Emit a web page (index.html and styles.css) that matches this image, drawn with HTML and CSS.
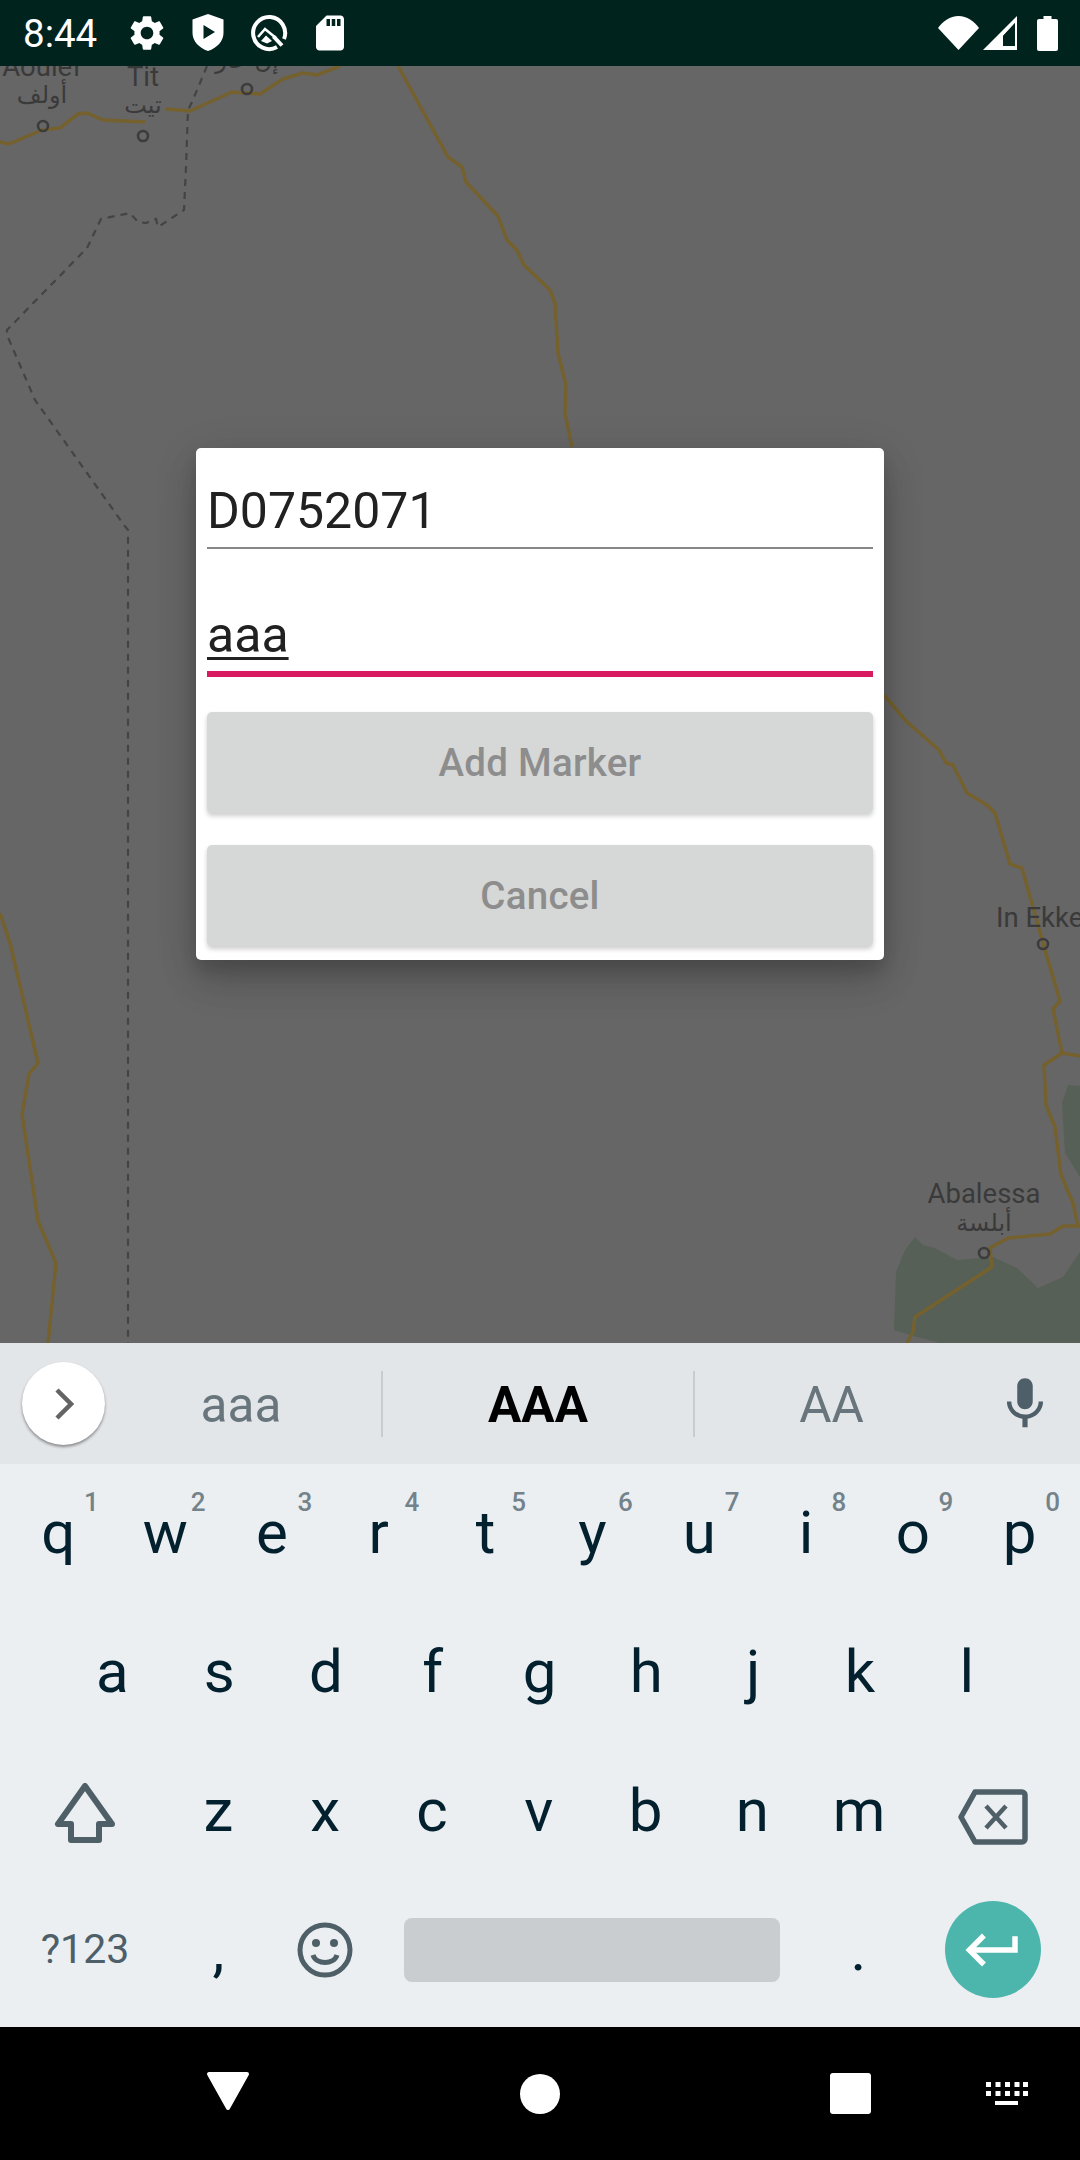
FILE: index.html
```html
<!DOCTYPE html>
<html lang="en">
<head>
<meta charset="utf-8">
<title>Add Marker</title>
<link rel="stylesheet" href="styles.css">
</head>
<body>
<div class="screen">
  <header class="status">
    <span class="time">8:44</span>
    <div class="status-left">
      <svg class="si" viewBox="0 0 24 24"><path fill-rule="evenodd" d="M19.14 12.94c.04-.3.06-.61.06-.94 0-.32-.02-.64-.07-.94l2.03-1.58c.18-.14.23-.41.12-.61l-1.92-3.32c-.12-.22-.37-.29-.59-.22l-2.39.96c-.5-.38-1.03-.7-1.62-.94l-.36-2.54c-.04-.24-.24-.41-.48-.41h-3.84c-.24 0-.43.17-.47.41l-.36 2.54c-.59.24-1.13.57-1.62.94l-2.39-.96c-.22-.08-.47 0-.59.22L2.74 8.87c-.12.21-.08.47.12.61l2.03 1.58c-.05.3-.09.63-.09.94s.02.64.07.94l-2.03 1.58c-.18.14-.23.41-.12.61l1.92 3.32c.12.22.37.29.59.22l2.39-.96c.5.38 1.03.7 1.62.94l.36 2.54c.05.24.24.41.48.41h3.84c.24 0 .44-.17.47-.41l.36-2.54c.59-.24 1.13-.56 1.62-.94l2.39.96c.22.08.47 0 .59-.22l1.92-3.32c.12-.22.07-.47-.12-.61l-2.01-1.58zM12 15.6c-1.98 0-3.6-1.62-3.6-3.6s1.62-3.6 3.6-3.6 3.6 1.62 3.6 3.6-1.62 3.6-3.6 3.6z"/></svg>
      <svg class="si" viewBox="0 0 42 42"><path fill-rule="evenodd" d="M21 2 L36.500 7.500 V21 C36.500 29 30 36 21 39 C12 36 5.500 29 5.500 21 V7.500 Z M16.500 13 V27 L28 20 Z"/></svg>
      <svg class="si" viewBox="0 0 42 42"><path class="q-ring" d="M29 35 A16 16 0 1 1 36 27"/><path class="q-ring" d="M25.500 24.500 L34 33.500"/><path class="q-chevron" d="M10 25 L17 17 L28 26"/><path d="M13 29 L18 23.500 L24 29 L19 31.500 Z"/></svg>
      <svg class="si" viewBox="0 0 24 24"><path d="M18 2h-8L4.020 8 4 20c0 1.100.9 2 2 2h12c1.100 0 2-.9 2-2V4c0-1.100-.9-2-2-2zm-6 6h-2V4h2v4zm3 0h-2V4h2v4zm3 0h-2V4h2v4z"/></svg>
    </div>
    <div class="status-right">
      <svg class="wifi" viewBox="0 0 41 34"><path d="M20.500 34 L0 12 C5 5 12 0 20.500 0 S36 5 41 12 Z"/></svg>
      <svg class="signal" viewBox="0 0 34 34"><path fill-rule="evenodd" d="M34 0 V34 H0 Z M32 30 V7 L20 20 V30 Z"/><path class="sig-dim" d="M32 7 V30 H20 V20 Z"/></svg>
      <svg class="battery" viewBox="0 0 21 35"><path d="M6.500 0 H14.500 V3 H19 A2 2 0 0 1 21 5 V33 A2 2 0 0 1 19 35 H2 A2 2 0 0 1 0 33 V5 A2 2 0 0 1 2 3 H6.500 Z"/></svg>
    </div>
  </header>

  <main class="map">
    <svg class="map-art" viewBox="0 66 1080 1277">
      <path class="green" d="M915 1237 L905 1250 L896 1272 L894 1330 L917 1337 L940 1343 H1080 V1252 L1063 1277 L1038 1288 L1017 1268 L993 1257 L957 1260 L935 1248 L923 1245 Z"/>
      <path class="green" d="M1068 1085 L1062 1103 L1065 1153 L1080 1177 V1086 Z"/>
      <path class="border" d="M207 66 L192 102 L188 110 L186 167 L184 210 L158 227 L156 219 L146 223 L138 222 L130 213 L101 219 L87 248 L7 330 L7 335 L35 400 L124 525 L128 530 V900 L128 1343"/>
      <path class="road" d="M0 142 L9 144 L42 130 L60 128 L78 114 L87 113 L103 120 L145 122"/>
      <path class="road" d="M166 109 L190 111 L232 92 L260 94 L283 79 L303 73 L317 75 L340 66"/>
      <path class="road" d="M398 66 L448 157 L462 167 L466 182 L498 216 L507 240 L517 250 L524 265 L550 290 L555 303 L558 353 L566 385 L565 413 L572 447"/>
      <path class="road" d="M884 695 L906 721 L939 750 L946 763 L953 765 L967 793 L987 805 L995 813 L1010 864 L1022 868 L1043 943 L1060 1001 L1053 1009 L1062 1053 L1044 1065 L1046 1105 L1055 1127 L1061 1175 L1073 1203 L1078 1226 L1063 1226 L1050 1234 L1008 1238 L990 1248 L992 1267 L915 1317 L913 1332 L907 1343"/>
      <path class="road" d="M1062 1053 L1080 1056"/>
      <path class="road" d="M1078 1226 H1080"/>
      <path class="road" d="M0 913 L10 943 L38 1063 L29 1074 L22 1114 L38 1221 L56 1263 L48 1343"/>
      <circle class="dot" cx="43" cy="126" r="5"/>
      <circle class="dot" cx="143" cy="136" r="5"/>
      <circle class="dot" cx="247" cy="89" r="5"/>
      <circle class="dot" cx="1043" cy="944" r="5"/>
      <circle class="dot" cx="984" cy="1253" r="5"/>
      <text class="label" x="42" y="76">Aoulef</text>
      <text class="label-ar" x="42" y="103">أولف</text>
      <text class="label" x="143" y="86">Tit</text>
      <text class="label-ar" x="143" y="113">تيت</text>
      <text class="label-ar" x="247" y="68">إن غار</text>
      <text class="label label-start" x="996" y="927">In Ekker</text>
      <text class="label" x="984" y="1203">Abalessa</text>
      <text class="label-ar" x="984" y="1231">أبلسة</text>
    </svg>
    <div class="scrim">
      <section class="dialog">
        <div class="field">D0752071</div>
        <div class="field field-active"><span class="composing">aaa</span></div>
        <div class="btn btn-first">Add Marker</div>
        <div class="btn">Cancel</div>
      </section>
    </div>
  </main>

  <section class="keyboard">
    <div class="strip">
      <div class="chip-wrap">
        <div class="chip"><svg class="chev" viewBox="0 0 20 34"><path d="M3 3 L17 17 L3 31"/></svg></div>
      </div>
      <div class="sug sug-1">aaa</div>
      <div class="sug sug-2">AAA</div>
      <div class="sug sug-3">AA</div>
      <svg class="mic" viewBox="0 0 24 24"><path d="M12 14c1.660 0 2.990-1.340 2.990-3L15 5c0-1.660-1.340-3-3-3S9 3.340 9 5v6c0 1.660 1.340 3 3 3zm5.300-3c0 3-2.540 5.100-5.300 5.100S6.700 14 6.700 11H5c0 3.410 2.720 6.230 6 6.720V21h2v-3.280c3.280-.48 6-3.300 6-6.720h-1.700z"/></svg>
    </div>
    <div class="keys">
      <div class="row row-1">
        <div class="key">q<span class="hint">1</span></div>
        <div class="key">w<span class="hint">2</span></div>
        <div class="key">e<span class="hint">3</span></div>
        <div class="key">r<span class="hint">4</span></div>
        <div class="key">t<span class="hint">5</span></div>
        <div class="key">y<span class="hint">6</span></div>
        <div class="key">u<span class="hint">7</span></div>
        <div class="key">i<span class="hint">8</span></div>
        <div class="key">o<span class="hint">9</span></div>
        <div class="key">p<span class="hint">0</span></div>
      </div>
      <div class="row row-2">
        <div class="key">a</div><div class="key">s</div><div class="key">d</div><div class="key">f</div><div class="key">g</div><div class="key">h</div><div class="key">j</div><div class="key">k</div><div class="key">l</div>
      </div>
      <div class="row row-3">
        <div class="key"><svg class="k-shift" viewBox="0 0 62 60"><path d="M31 3 L4 41 H17 V57 H45 V41 H58 Z"/></svg></div>
        <div class="key">z</div><div class="key">x</div><div class="key">c</div><div class="key">v</div><div class="key">b</div><div class="key">n</div><div class="key">m</div>
        <div class="key"><svg class="k-back" viewBox="0 0 70 56"><path d="M3 28 L17 3 H64 A3 3 0 0 1 67 6 V50 A3 3 0 0 1 64 53 H17 Z"/><path class="k-x" d="M28 17 L48 39 M48 17 L28 39"/></svg></div>
      </div>
      <div class="row row-4">
        <div class="key key-sym">?123</div>
        <div class="key">,</div>
        <div class="key"><svg class="k-emoji" viewBox="0 0 56 56"><circle cx="28" cy="28" r="25"/><circle class="k-eye" cx="19" cy="21" r="4"/><circle class="k-eye" cx="37" cy="21" r="4"/><path d="M16 33 C19 43 37 43 40 33"/></svg></div>
        <div class="key"><div class="space"></div></div>
        <div class="key">.</div>
        <div class="key"><div class="enter"><svg class="k-enter" viewBox="0 0 24 24"><path d="M19 7v4H5.830l3.580-3.590L8 6l-6 6 6 6 1.410-1.410L5.830 13H21V7z"/></svg></div></div>
      </div>
    </div>
  </section>

  <footer class="nav">
    <svg class="nav-back" viewBox="0 0 44 46"><path d="M3 3 H41 L22 37 Z"/></svg>
    <svg class="nav-home" viewBox="0 0 40 40"><circle cx="20" cy="20" r="20"/></svg>
    <svg class="nav-recent" viewBox="0 0 41 41"><rect width="41" height="41" rx="3"/></svg>
    <svg class="nav-kbd" viewBox="0 0 42 23">
      <path d="M0 0h5v5H0zM9.500 0h5v5h-5zM19 0h5v5h-5zM28.500 0h5v5h-5zM37 0h5v5h-5zM0 9h5v5H0zM9.500 9h5v5h-5zM19 9h5v5h-5zM28.500 9h5v5h-5zM37 9h5v5h-5zM9 19h23v4H9z"/>
    </svg>
  </footer>
</div>
</body>
</html>
```
FILE: styles.css
```css
* { box-sizing: border-box; }
html, body { margin: 0; padding: 0; }
body { background: #000; font-family: Roboto, "Liberation Sans", sans-serif; }
.screen { width: 1080px; height: 2160px; display: flex; flex-direction: column; overflow: hidden; }

/* status bar */
.status { height: 66px; flex: none; background: #00231e; color: #fff; display: flex; align-items: center; padding-left: 23px; }
.time { font-size: 38.5px; width: 102.5px; line-height: 66px; padding-top: 2px; }
.status-left { display: flex; gap: 19px; }
.si { width: 42px; height: 42px; fill: #fff; display: block; }
.q-ring { fill: none; stroke: #fff; stroke-width: 4; }
.q-chevron { fill: none; stroke: #fff; stroke-width: 2.6; }
.status-right { margin-left: auto; display: flex; align-items: center; padding-right: 22px; }
.wifi { width: 41px; height: 34px; fill: #fff; margin-right: 4px; }
.signal { width: 34px; height: 34px; fill: #fff; margin-right: 20px; }
.sig-dim { fill: #00231e; }
.battery { width: 21px; height: 35px; fill: #fff; }

/* map */
.map { height: 1277px; flex: none; position: relative; background: #666; overflow: hidden; }
.map-art { display: block; width: 1080px; height: 1277px; }
.green { fill: #576056; }
.road { fill: none; stroke: #75612e; stroke-width: 3.5; stroke-linejoin: round; }
.border { fill: none; stroke: #444; stroke-width: 2.2; stroke-dasharray: 7 6; }
.dot { fill: none; stroke: #3c3c3c; stroke-width: 2.6; }
.label { font-family: Roboto, sans-serif; font-size: 27.5px; fill: #3a3a3a; text-anchor: middle; }
.label-start { text-anchor: start; }
.label-ar { font-family: "DejaVu Sans", sans-serif; font-size: 24px; fill: #3a3a3a; text-anchor: middle; }

/* dialog */
.scrim { position: absolute; inset: 0 0 1px; display: flex; align-items: center; justify-content: center; }
.dialog { width: 688px; height: 512px; background: #fff; border-radius: 5px; padding: 33px 11px 0; box-shadow: 0 24px 38px rgba(0,0,0,.12), 0 9px 46px rgba(0,0,0,.12), 0 11px 15px rgba(0,0,0,.12); }
.field { font-size: 50px; line-height: 60px; height: 68px; color: #212121; border-bottom: 2px solid #878787; padding-bottom: 6px; margin-bottom: 55px; }
.field-active { height: 73px; padding-top: 1px; padding-bottom: 6px; border-bottom: 6px solid #d81b60; margin-bottom: 35px; }
.composing { text-decoration: underline 3px; text-underline-offset: 5px; }
.btn { height: 101px; background: #d6d7d7; border-radius: 5px; box-shadow: 0 3px 5px rgba(0,0,0,.2); color: #8d8d8d; font-size: 38.5px; font-weight: 500; letter-spacing: .25px; display: flex; align-items: center; justify-content: center; }
.btn-first { margin-bottom: 32px; }

/* keyboard */
.keyboard { flex: none; background: #ebeff2; color: #03202e; }
.strip { height: 121px; background: #e3e6e9; display: flex; align-items: center; }
.chip-wrap { width: 101px; padding-left: 22px; }
.chip { width: 83px; height: 83px; border-radius: 50%; background: #fff; box-shadow: 0 2px 3px rgba(0,0,0,.4); display: flex; align-items: center; justify-content: center; }
.chev { width: 20px; height: 34px; fill: none; stroke: #646464; stroke-width: 4.5; }
.sug { height: 66px; line-height: 66px; padding-top: 1px; text-align: center; font-size: 49.5px; color: #68757d; }
.sug-1 { width: 280px; }
.sug-2 { width: 314px; border-left: 2px solid #c8cccf; border-right: 2px solid #c8cccf; color: #000; font-weight: 700; }
.sug-3 { width: 273px; }
.mic { width: 62px; height: 62px; fill: #4e5f69; margin-left: 26px; }
.keys { height: 564px; padding: 0 6px; }
.row { height: 139px; display: grid; }
.row-1 { grid-template-columns: repeat(10, 1fr); margin: -1px 1px 0 -1px; }
.row-2 { grid-template-columns: repeat(9, 106.8px); padding-left: 53px; }
.row-3 { grid-template-columns: 160px repeat(7, 106.8px) 160px; margin-left: -1px; }
.row-4 { grid-template-columns: 160px 107px 106px 427px 107px 161px; margin-left: -1px; }
.key { position: relative; font-size: 60px; line-height: 139px; text-align: center; display: flex; align-items: center; justify-content: center; }
.hint { position: absolute; top: 26px; right: 13px; font-size: 26px; line-height: 26px; font-weight: 500; color: #74828a; }
.key-sym { font-size: 41px; color: #4e5f69; }
.k-shift { width: 62px; height: 60px; fill: none; stroke: #4f5f67; stroke-width: 6; stroke-linejoin: round; margin-top: 4px; }
.k-back { width: 70px; height: 56px; fill: none; stroke: #4f5f67; stroke-width: 5.5; stroke-linejoin: round; margin-top: 12px; }
.k-x { stroke-width: 4.5; }
.k-emoji { width: 56px; height: 56px; fill: none; stroke: #4f5f67; stroke-width: 5; }
.k-eye { fill: #4f5f67; stroke: none; }
.space { width: 376px; height: 64px; background: #c9cdd0; border-radius: 8px; }
.enter { width: 96px; height: 97px; border-radius: 50%; background: #4db6ac; display: flex; align-items: center; justify-content: center; }
.k-enter { width: 66px; height: 66px; fill: #fff; }

/* nav */
.nav { height: 132px; flex: 1; background: #000; display: flex; align-items: center; gap: 270px; padding-left: 206px; }
.nav-back { width: 44px; height: 46px; fill: #fff; stroke: #fff; stroke-width: 4; stroke-linejoin: round; }
.nav-home { width: 40px; height: 40px; fill: #fff; }
.nav-recent { width: 41px; height: 41px; fill: #fff; }
.nav-kbd { width: 42px; height: 23px; fill: #fff; margin-left: -155px; }
```
